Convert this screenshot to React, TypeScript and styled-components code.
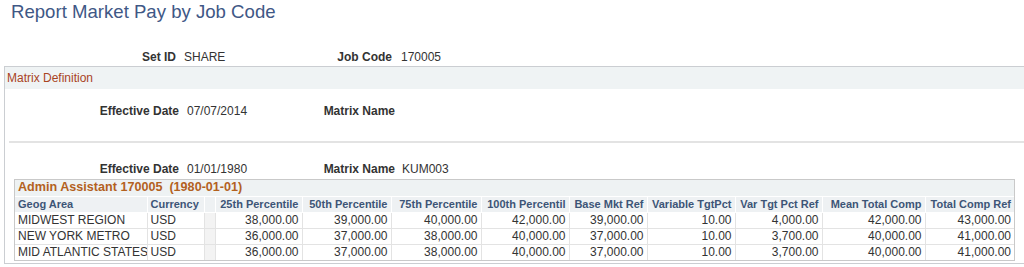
import styled, { createGlobalStyle } from 'styled-components';

const GlobalStyle = createGlobalStyle`
  body {
    margin: 0;
    background: #fff;
    font-family: "Liberation Sans", Arial, sans-serif;
    color: #333;
    overflow: hidden;
  }
`;

type Row = {
  area: string;
  currency: string;
  values: string[];
};

const columns = [
  { title: 'Geog Area', width: 132, align: 'left' },
  { title: 'Currency', width: 57, align: 'left' },
  { title: '', width: 11, align: 'left' },
  { title: '25th Percentile', width: 87, align: 'right' },
  { title: '50th Percentile', width: 89, align: 'right' },
  { title: '75th Percentile', width: 90, align: 'right' },
  { title: '100th Percentil', width: 88, align: 'right' },
  { title: 'Base Mkt Ref', width: 78, align: 'right' },
  { title: 'Variable TgtPct', width: 88, align: 'right' },
  { title: 'Var Tgt Pct Ref', width: 87, align: 'right' },
  { title: 'Mean Total Comp', width: 103, align: 'right' },
  { title: 'Total Comp Ref', width: 89, align: 'right' },
];

const rows: Row[] = [
  {
    area: 'MIDWEST REGION',
    currency: 'USD',
    values: ['38,000.00', '39,000.00', '40,000.00', '42,000.00', '39,000.00', '10.00', '4,000.00', '42,000.00', '43,000.00'],
  },
  {
    area: 'NEW YORK METRO',
    currency: 'USD',
    values: ['36,000.00', '37,000.00', '38,000.00', '40,000.00', '37,000.00', '10.00', '3,700.00', '40,000.00', '41,000.00'],
  },
  {
    area: 'MID ATLANTIC STATES',
    currency: 'USD',
    values: ['36,000.00', '37,000.00', '38,000.00', '40,000.00', '37,000.00', '10.00', '3,700.00', '40,000.00', '41,000.00'],
  },
];

function App() {
  return (
    <Page>
      <GlobalStyle />
      <Title>Report Market Pay by Job Code</Title>

      <KeyRow>
        <Label $width={176}>Set ID</Label>
        <Value $width={108}>SHARE</Value>
        <Label $width={100}>Job Code</Label>
        <Value $width={120} $gap={9}>170005</Value>
      </KeyRow>

      <Panel>
        <PanelHeader>Matrix Definition</PanelHeader>

        <FieldRow $top={14}>
          <Label $width={174}>Effective Date</Label>
          <Value $width={108}>07/07/2014</Value>
          <Label $width={100}>Matrix Name</Label>
          <Value $width={120} $gap={7}></Value>
        </FieldRow>

        <Separator />

        <FieldRow $top={18}>
          <Label $width={174}>Effective Date</Label>
          <Value $width={108}>01/01/1980</Value>
          <Label $width={100}>Matrix Name</Label>
          <Value $width={120} $gap={7}>KUM003</Value>
        </FieldRow>

        <Grid>
          <GridTitle>Admin Assistant 170005&nbsp;&nbsp;(1980-01-01)</GridTitle>
          <Table>
            <colgroup>
              {columns.map((c, i) => (
                <col key={i} style={{ width: c.width }} />
              ))}
            </colgroup>
            <thead>
              <tr>
                {columns.map((c, i) => (
                  <HeadCell key={i} $align={c.align}>
                    {c.title}
                  </HeadCell>
                ))}
              </tr>
            </thead>
            <tbody>
              {rows.map(r => (
                <tr key={r.area}>
                  <Cell>{r.area}</Cell>
                  <Cell>{r.currency}</Cell>
                  <BlankCell />
                  {r.values.map((v, i) => (
                    <Cell key={i} $align="right">
                      {v}
                    </Cell>
                  ))}
                </tr>
              ))}
            </tbody>
          </Table>
        </Grid>
      </Panel>
    </Page>
  );
}

const Page = styled.div`
  width: 1024px;
  font-size: 12px;
`;

const Title = styled.h1`
  margin: 0;
  padding: 1px 0 0 11px;
  font-size: 18.6px;
  font-weight: normal;
  line-height: 22px;
  color: #3f5886;
`;

const KeyRow = styled.div`
  display: flex;
  margin-top: 26px;
  line-height: 16px;
`;

const FieldRow = styled.div<{ $top: number }>`
  display: flex;
  margin-top: ${p => p.$top}px;
  line-height: 16px;
`;

const Label = styled.span<{ $width: number }>`
  width: ${p => p.$width}px;
  text-align: right;
  font-weight: bold;
  color: #333;
`;

const Value = styled.span<{ $width: number; $gap?: number }>`
  width: ${p => p.$width}px;
  margin-left: ${p => p.$gap ?? 8}px;
  color: #333;
`;

const Panel = styled.div`
  margin: 1px 0 0 4px;
  padding-bottom: 2px;
  border: 1px solid #cbced2;
  border-right: none;
`;

const PanelHeader = styled.div`
  height: 22px;
  line-height: 22px;
  padding-left: 2px;
  background: #eff3f4;
  color: #a9441f;
  font-size: 12px;
`;

const Separator = styled.hr`
  margin: 22px 0 0 4px;
  height: 2px;
  border: none;
  background: #e3e3e3;
`;

const Grid = styled.div`
  width: 999px;
  margin: 2px 0 0 9px;
  border: 1px solid #c9c9c9;
`;

const GridTitle = styled.div`
  height: 15px;
  line-height: 15px;
  padding: 0 0 1px 3px;
  border-bottom: 1px solid #fff;
  background: #eef2f3;
  color: #b3611e;
  font-weight: bold;
  font-size: 12.6px;
`;

const Table = styled.table`
  width: 999px;
  table-layout: fixed;
  border-collapse: collapse;
  border-style: hidden;
`;

const HeadCell = styled.th<{ $align: string }>`
  height: 15px;
  padding: 0 3px;
  line-height: 15px;
  font-size: 11px;
  font-weight: bold;
  text-align: ${p => p.$align};
  white-space: nowrap;
  overflow: hidden;
  color: #3d5577;
  background: #eef1f3;
  border: 1px solid #fff;
`;

const Cell = styled.td<{ $align?: string }>`
  height: 15px;
  padding: 0 3px;
  line-height: 15px;
  font-size: 12px;
  text-align: ${p => p.$align ?? 'left'};
  white-space: nowrap;
  overflow: hidden;
  color: #333;
  background: #fff;
  border: 1px solid #e3e3e3;
`;

const BlankCell = styled(Cell)`
  background: #f3f3f3;
`;

export default App;
